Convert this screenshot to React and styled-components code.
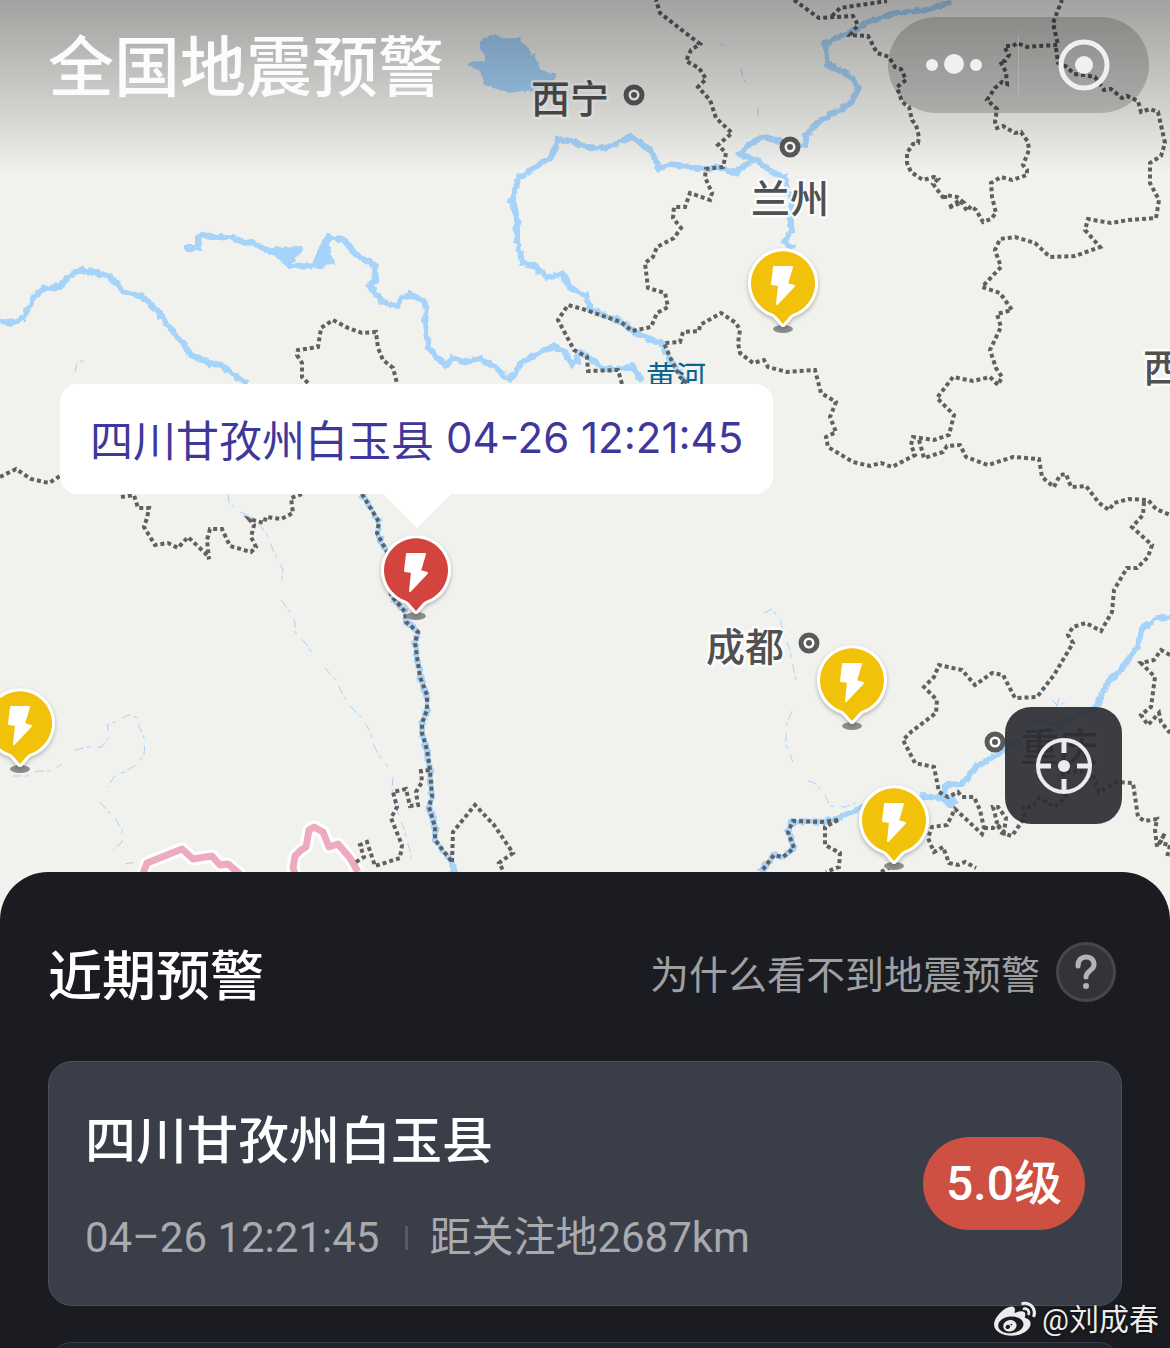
import React from 'react';
import styled, { createGlobalStyle } from 'styled-components';
import { FaWeibo } from 'react-icons/fa';

const GlobalStyle = createGlobalStyle`
  *, *::before, *::after {
    box-sizing: border-box;
  }
  body {
    margin: 0;
    background: #1b1c21;
    font-family: Roboto, "Noto Sans CJK SC", sans-serif;
  }
  button {
    padding: 0;
    border: 0;
    background: none;
    font: inherit;
    color: inherit;
    cursor: pointer;
  }
  h1, h2, h3, p {
    margin: 0;
    font-weight: 500;
  }
  svg {
    display: block;
  }
`;

const Page = styled.div`
  position: relative;
  display: flex;
  flex-direction: column;
  height: 100vh;
  overflow: hidden;
`;

/* Map */

const MapArea = styled.section`
  position: relative;
  flex: none;
  height: 922px;
  overflow: hidden;
  background: #f1f2ee;
`;

const MapSvg = styled.svg`
  width: 100%;
  height: 100%;
`;

const CityName = styled.text`
  font-family: "Noto Sans CJK SC", sans-serif;
  font-size: 39px;
  font-weight: 500;
  fill: #505050;
  stroke: rgba(255, 255, 255, 0.8);
  stroke-width: 5px;
  stroke-linejoin: round;
  paint-order: stroke;
`;

const RiverName = styled.text`
  font-family: "Noto Sans CJK SC", sans-serif;
  font-size: 30px;
  fill: #0b6490;
`;

const Header = styled.header`
  position: absolute;
  top: 0;
  left: 0;
  right: 0;
  display: flex;
  align-items: flex-start;
  justify-content: space-between;
  height: 174px;
  padding: 17px 21px 0 48px;
  background: linear-gradient(rgba(0, 0, 0, 0.33), rgba(0, 0, 0, 0.14) 60%, rgba(0, 0, 0, 0));
`;

const Title = styled.h1`
  color: #fcfcfc;
  font-size: 66px;
  font-weight: 500;
  line-height: 104px;
`;

const Capsule = styled.div`
  display: flex;
  align-items: center;
  height: 96px;
  border-radius: 48px;
  background: rgba(0, 0, 0, 0.18);
`;

const CapsuleButton = styled.button`
  display: flex;
  align-items: center;
  justify-content: center;
  width: 130px;
  height: 96px;
`;

const CapsuleDivider = styled.span`
  width: 1px;
  height: 60px;
  background: rgba(255, 255, 255, 0.2);
`;

const PinButton = styled.button`
  position: absolute;
  left: ${(props) => props.$x - 40}px;
  top: ${(props) => props.$y - 40}px;
  width: 80px;
  height: 92px;
`;

const Callout = styled.div`
  position: absolute;
  left: 60px;
  top: 384px;
  display: flex;
  align-items: center;
  gap: 12px;
  height: 110px;
  padding: 0 30px 3px;
  border-radius: 18px;
  background: #fff;
  color: #3f389b;
  font-size: 43px;
  white-space: nowrap;

  &::after {
    content: '';
    position: absolute;
    top: 100%;
    left: 50%;
    border: 34px solid transparent;
    border-top-color: #fff;
    border-bottom: 0;
    transform: translateX(-50%);
  }
`;

const CalloutTime = styled.time`
  font-family: Inter, sans-serif;
  font-size: 42px;
`;

const LocateButton = styled.button`
  position: absolute;
  right: 48px;
  bottom: 98px;
  display: flex;
  align-items: center;
  justify-content: center;
  width: 117px;
  height: 117px;
  border-radius: 26px;
  background: rgba(45, 46, 51, 0.92);
`;

/* Recent warnings */

const Panel = styled.section`
  position: relative;
  display: flex;
  flex-direction: column;
  gap: 36px;
  flex: 1 0 auto;
  margin-top: -50px;
  padding: 50px 48px 48px;
  border-radius: 48px 48px 0 0;
  background: #1b1c21;
`;

const PanelHeader = styled.div`
  display: flex;
  align-items: center;
  justify-content: space-between;
  height: 100px;
  margin-bottom: 3px;
  padding-right: 6px;
`;

const PanelTitle = styled.h2`
  color: #fff;
  font-size: 54px;
`;

const HelpLink = styled.a`
  display: flex;
  align-items: center;
  gap: 16px;
  color: #a0a0a2;
  font-size: 39px;
  text-decoration: none;
`;

const HelpIcon = styled.span`
  display: flex;
  align-items: center;
  justify-content: center;
  width: 60px;
  height: 60px;
  border: 3px solid #46474c;
  border-radius: 50%;
  background: #333438;
`;

const Card = styled.article`
  display: flex;
  align-items: center;
  justify-content: space-between;
  min-height: 245px;
  padding: 0 36px;
  border: 1px solid ${(props) => (props.$active ? '#4d505c' : '#3a3d47')};
  border-radius: 24px;
  background: ${(props) => (props.$active ? '#3a3e49' : '#22252e')};
`;

const CardBody = styled.div`
  display: flex;
  flex-direction: column;
  gap: 32px;
  padding-top: 12px;
`;

const Place = styled.h3`
  color: #fff;
  font-size: 51px;
  line-height: 64px;
`;

const Meta = styled.p`
  display: flex;
  align-items: center;
  color: #a9aaae;
  font-size: 42px;
  font-weight: 400;
  line-height: 64px;
`;

const MetaDivider = styled.span`
  width: 3px;
  height: 24px;
  margin: 0 21px 0 26px;
  background: #575a64;
`;

const Magnitude = styled.span`
  display: flex;
  align-items: center;
  justify-content: center;
  width: 162px;
  height: 93px;
  padding-bottom: 10px;
  border-radius: 47px;
  background: #cd5042;
  color: #fff;
  font-size: 48px;
  font-weight: 500;
`;

const Watermark = styled.div`
  position: absolute;
  right: 11px;
  bottom: 6px;
  display: flex;
  align-items: center;
  gap: 6px;
  color: #ececec;
  font-size: 30px;
  line-height: 44px;
  text-shadow: 0 0 3px #000;
`;

const lakes = [
  'M480 40L488 38L496 34L503 38L520 38L527 47L534 55L539 67L545 72L555 73L554 95L534 95L532 90L509 93L497 88L484 85L480 71L469 65L473 60L485 62L484 54L480 49Z',
  'M274 247L302 246L304 251L298 257L295 262L289 262L281 257Z',
  'M325 237L330 237L330 255L337 263L320 267L311 265L316 255L321 242Z',
  'M921 792L930 794L944 796L953 795L958 802L953 808L946 806L942 800L922 800Z',
];

const rivers = [
  'M-4 320L11 323L23 318L29 308L33 297L44 288L59 287L69 277L82 270L96 273L111 277L124 292L143 297L159 313L166 323L178 338L191 355L209 363L222 365L233 375L247 384',
  'M185 248L198 248L198 238L203 235L210 237L232 237L245 243L253 242L264 249L277 253L290 266L322 265L329 237L344 239L356 255L375 265L376 280L369 286L383 302L398 306L402 298L410 295L423 300L427 308L425 323L428 347L434 354L446 366L453 358L467 362L480 359L494 367L510 380L520 365L536 354L553 347L563 350L572 365L578 362L578 352L589 357L603 369L618 369L633 367L642 382',
  'M951 2L926 10L896 13L870 21L851 32L825 43L828 65L849 75L859 88L849 105L821 120L806 135L806 145L796 146L783 142L764 137L751 143L740 154L757 160L772 172L785 177L791 200L791 230L785 242L793 249',
  'M757 160L746 164L736 173L719 167L704 169L685 166L670 164L659 169L651 150L631 137L606 148L586 147L574 142L559 139L551 157L530 171L519 177L515 192L511 202L517 217L517 240L522 263L534 265L547 278L563 274L570 288L586 295L591 310L621 322L636 333L661 343L670 360L680 373L687 383',
  'M362 494L379 522L377 533L387 552L391 595L405 612L406 622L418 632L415 643L420 677L427 695L427 710L422 723L422 733L427 750L430 770L432 797L429 807L435 827L435 840L452 862L453 872',
  'M1174 618L1159 617L1143 628L1137 647L1122 668L1107 683L1096 708L1073 717L1058 727L1037 720L1024 737L998 753L984 763L977 765L966 780L962 784L947 785L941 798L921 797L893 808L860 808L840 818L821 822L793 821L788 832L794 848L783 857L774 855L761 872',
];

const streams = [
  'M75 372L77 363L88 359',
  'M228 494L229 502L240 512L256 519L267 535L275 555L283 570L281 585',
  'M281 600L290 612L295 622L295 632L307 645L314 656',
  'M325 668L336 680L343 695L352 708L362 718L370 731L373 744L380 757L388 767',
  'M393 777L392 790L395 805L403 826L411 855L411 862',
  'M75 750L88 747L102 747L110 735L107 725L115 722L128 715L138 718L139 726L145 740L144 755L137 764L125 772L115 775L108 787',
  'M13 776L28 776L38 771L51 771L62 764',
  'M100 802L105 808L115 818L122 830L122 842L113 850M125 864L136 862',
  'M764 613L772 609L780 620L784 635L790 650L792 662L796 680M792 711L786 725L786 745L793 762M808 781L815 783L825 795L830 806L845 807L858 802',
  'M719 43L724 46M741 68L743 78L746 83M758 108L758 120',
  'M1052 700L1058 706L1066 702M1059 698L1056 709',
];

const borders = [
  'M0 477L16 469L31 479L49 483L60 476',
  'M121 497L134 495L138 508L149 508L147 518L144 527L155 545L168 543L178 548L188 537L205 553L209 559L207 540L210 529L222 529L230 546L251 552L256 547L251 537L254 525L249 519L264 523L266 517L281 519L293 513L291 498L302 494',
  'M308 383L302 377L302 363L297 355L298 350L318 347L321 328L333 320L348 328L362 333L376 332L378 348L383 360L393 368L397 383',
  'M622 384L618 370L588 371L587 357L574 350L566 335L558 320L568 305L586 310L600 315L621 322L632 331L651 327L657 313L668 307L665 293L648 288L645 263L653 257L657 247L674 238L681 228L673 218L674 207L685 207L690 193L710 200L712 193L705 177L706 169L723 167L726 153L718 145L732 133L716 118L710 100L698 87L706 79L699 68L686 61L691 50L700 44L683 31L660 13L656 0',
  'M794 0L819 18L853 16L858 25L850 35L868 36L877 53L889 57L895 67L901 69L906 80L897 87L902 102L909 107L912 120L916 125L919 137L918 143L913 144L907 153L907 163L911 172L923 180L934 177L938 179L933 184L945 200L945 195L957 197L963 202L948 208L960 200L967 211L971 206L976 210L983 222L991 219L996 213L992 197L991 183L1001 177L1012 180L1027 175L1027 170L1023 165L1029 150L1028 142L1021 132L1015 133L1003 126L997 128L995 122L997 109L987 100L995 88L1002 82L1007 84L1006 72L1000 61L1005 61L1009 55L1006 50L1005 46L1013 46L1017 43L1027 47L1038 46L1058 45L1053 23L1062 0',
  'M832 16L840 8L887 1',
  'M1056 48L1058 63L1067 67L1074 74L1084 75L1095 77L1104 90L1111 89L1122 98L1127 96L1138 101L1141 112L1150 109L1158 112L1165 143L1161 156L1150 163L1150 183L1159 200L1156 218L1129 220L1111 223L1088 219L1085 230L1100 247L1075 256L1050 257L1035 243L1015 237L1000 239L995 250L1001 267L982 287L1000 293L1012 310L997 314L1001 327L990 350L996 368L1002 377L998 385L990 377L973 381L953 377L937 398L954 415L949 435L934 440L913 437L911 445L915 455L892 467L881 463L870 466L853 462L828 447L826 437L836 432L830 417L836 402L821 393L815 370L787 372L768 367L764 360L753 363L740 353L738 343L740 330L736 323L721 313L700 325L699 331L683 332L680 342L664 343L670 357L680 377L687 383',
  'M919 440L924 458L943 452L947 446L960 445L966 457L988 465L1013 457L1039 459L1042 477L1054 487L1060 475L1066 474L1071 487L1086 486L1099 503L1109 510L1114 503L1129 499L1148 500L1156 509L1170 515',
  'M1144 502L1143 515L1132 527L1152 545L1148 557L1137 568L1127 568L1114 590L1112 612L1101 631L1086 623L1073 627L1068 635L1073 643L1054 675L1037 697L1015 698L1003 675L992 673L975 685L962 670L939 665L934 677L924 687L937 700L936 713L911 732L903 740L915 763L934 767L939 792L948 797L958 792L962 797L974 797L980 810L984 828L982 834L955 809L947 825L932 827L928 838L934 852L943 847L949 863L958 865L965 862L976 868',
  'M984 828L993 828L997 822L993 807L998 807L1006 818L1004 832L997 824L1002 833L1012 836L1025 817L1023 807L1032 807L1039 798L1055 807L1066 797L1063 773L1080 771L1093 775L1099 792L1117 782L1133 783L1138 817L1145 821L1157 819L1155 830L1157 847L1165 833L1160 843L1170 845L1167 857',
  'M1170 655L1161 650L1154 660L1141 663L1155 677L1151 707L1141 715L1148 725L1159 713L1161 722L1170 733',
  'M838 820L825 827L825 845L840 853L839 867L826 872',
  'M838 820L821 822L793 821L788 832L794 848L783 857L774 855L761 872',
  'M881 872L892 866',
  'M356 862L364 857L360 845L367 842L375 866L400 858L402 845L391 818L397 807L393 792L406 789L410 806L418 805L416 792L422 782L421 771L430 770',
  'M362 494L379 522L377 533L387 552L391 595L405 612L406 622L418 632L415 643L420 677L427 695L427 710L422 723L422 733L427 750L430 770L432 797L429 807L435 827L435 840L452 862',
  'M452 862L453 832L475 805L494 825L513 853L499 863L504 872',
];

const frontiers =
  'M142 876L147 863L182 849L193 859L212 856L220 865L228 864L242 876M296 876L293 868L295 856L301 850L306 847L309 830L314 827L323 832L329 847L338 844L350 858L358 872';

const cities = [
  { name: '西宁', x: 531, y: 113, markerX: 634, markerY: 95 },
  { name: '兰州', x: 751, y: 213, markerX: 790, markerY: 147 },
  { name: '成都', x: 706, y: 661, markerX: 809, markerY: 643 },
  { name: '重庆', x: 1020, y: 761, markerX: 995, markerY: 742 },
  { name: '西', x: 1143, y: 382 },
];

const pins = [
  { id: 1, x: 783, y: 283 },
  { id: 2, x: 852, y: 680 },
  { id: 3, x: 20, y: 723 },
  { id: 4, x: 894, y: 820 },
  { id: 5, x: 416, y: 570, active: true },
];

function BaseMap() {
  return (
    <MapSvg viewBox="0 0 1170 922" preserveAspectRatio="xMinYMin slice" fill="none">
      <defs>
        <filter id="bank" x="-5%" y="-5%" width="110%" height="110%">
          <feTurbulence type="fractalNoise" baseFrequency="0.15" numOctaves="2" seed="4" />
          <feDisplacementMap in="SourceGraphic" scale="6" xChannelSelector="R" yChannelSelector="G" />
        </filter>
      </defs>
      <g filter="url(#bank)">
        {lakes.map((d) => <path key={d} d={d} fill="#a6d3fa" />)}
        {rivers.map((d) => <path key={d} d={d} stroke="#a6d3fa" strokeWidth="6" />)}
      </g>
      {streams.map((d) => (
        <path key={d} d={d} stroke="#a6d3fa" strokeDasharray="9 3 4 7" />
      ))}
      <path d={frontiers} stroke="#fff" strokeWidth="13" strokeLinejoin="round" />
      <path d={frontiers} stroke="#eeabbf" strokeWidth="7" strokeLinejoin="round" />
      <RiverName x="646" y="387">黄河</RiverName>
      {borders.map((d) => (
        <path key={d} d={d} stroke="#606060" strokeWidth="4" strokeDasharray="4 3" />
      ))}
      {cities.map((city) => (
        <g key={city.name}>
          {city.markerX && (
            <>
              <circle cx={city.markerX} cy={city.markerY} r="8" fill="#fff" stroke="#5a5a5a" strokeWidth="5" />
              <circle cx={city.markerX} cy={city.markerY} r="3" fill="#5a5a5a" />
            </>
          )}
          <CityName x={city.x} y={city.y}>{city.name}</CityName>
        </g>
      ))}
    </MapSvg>
  );
}

function Pin({ x, y, active }) {
  const shape = 'M-12 30A32 32 0 1 1 12 30Q9 31 7 33L0 41L-7 33Q-9 31 -12 30Z';
  return (
    <PinButton $x={x} $y={y} aria-label="地震预警">
      <svg width="80" height="92" viewBox="-40 -40 80 92">
        <ellipse cx="0" cy="46" rx="10" ry="4" fill="#8d8d8b" />
        <g style={{ filter: 'drop-shadow(0 2px 2px rgba(0, 0, 0, 0.25))' }}>
          <path d={shape} fill="#fff" stroke="#fff" strokeWidth="6" strokeLinejoin="round" />
        </g>
        <path d={shape} fill={active ? '#d3443f' : '#f2c10a'} />
        <path
          d="M-9 -16H9L4 1L11 3L-6 21L-4 2L-11 1Z"
          fill="#fff"
          stroke="#fff"
          strokeWidth="2"
          strokeLinejoin="round"
        />
      </svg>
    </PinButton>
  );
}

function TopBar() {
  return (
    <Header>
      <Title>全国地震预警</Title>
      <Capsule>
        <CapsuleButton aria-label="更多">
          <svg width="58" height="24" viewBox="0 0 58 24" fill="#f0f0f0">
            <circle cx="8" cy="12" r="6" />
            <circle cx="30" cy="11" r="10" />
            <circle cx="52" cy="12" r="6" />
          </svg>
        </CapsuleButton>
        <CapsuleDivider />
        <CapsuleButton aria-label="关闭">
          <svg width="52" height="52" viewBox="0 0 52 52">
            <circle cx="26" cy="26" r="23" fill="none" stroke="#f0f0f0" strokeWidth="5" />
            <circle cx="26" cy="26" r="9" fill="#f0f0f0" />
          </svg>
        </CapsuleButton>
      </Capsule>
    </Header>
  );
}

function WarningCard({ place, time, distance, magnitude }) {
  return (
    <Card $active>
      <CardBody>
        <Place>{place}</Place>
        <Meta>
          <time>{time}</time>
          <MetaDivider />
          <span>{distance}</span>
        </Meta>
      </CardBody>
      <Magnitude>{magnitude}</Magnitude>
    </Card>
  );
}

function App() {
  return (
    <Page>
      <GlobalStyle />
      <MapArea>
        <BaseMap />
        <TopBar />
        {pins.map((pin) => (
          <Pin key={pin.id} x={pin.x} y={pin.y} active={pin.active} />
        ))}
        <Callout>
          <span>四川甘孜州白玉县</span>
          <CalloutTime>04-26 12:21:45</CalloutTime>
        </Callout>
        <LocateButton aria-label="定位">
          <svg width="58" height="58" viewBox="0 0 58 58" fill="none" stroke="#ececee" strokeWidth="4">
            <circle cx="29" cy="29" r="26" />
            <path d="M29 3V16M29 42V55M3 29H16M42 29H55" strokeWidth="5" />
            <circle cx="29" cy="29" r="6" fill="#ececee" stroke="none" />
          </svg>
        </LocateButton>
      </MapArea>
      <Panel>
        <PanelHeader>
          <PanelTitle>近期预警</PanelTitle>
          <HelpLink href="#help">
            为什么看不到地震预警
            <HelpIcon>
              <svg width="24" height="38" viewBox="0 0 24 38" fill="none" stroke="#b4b4b6" strokeWidth="5" strokeLinecap="round">
                <path d="M4 13C4 6 8 4 12 4C17 4 20 7 20 12C20 17 12 18 12 24" />
                <circle cx="12" cy="33" r="3" fill="#b4b4b6" stroke="none" />
              </svg>
            </HelpIcon>
          </HelpLink>
        </PanelHeader>
        <WarningCard
          place="四川甘孜州白玉县"
          time="04–26 12:21:45"
          distance="距关注地2687km"
          magnitude="5.0级"
        />
        <Card />
      </Panel>
      <Watermark>
        <FaWeibo size={42} />
        <span>@刘成春</span>
      </Watermark>
    </Page>
  );
}

export default App;
